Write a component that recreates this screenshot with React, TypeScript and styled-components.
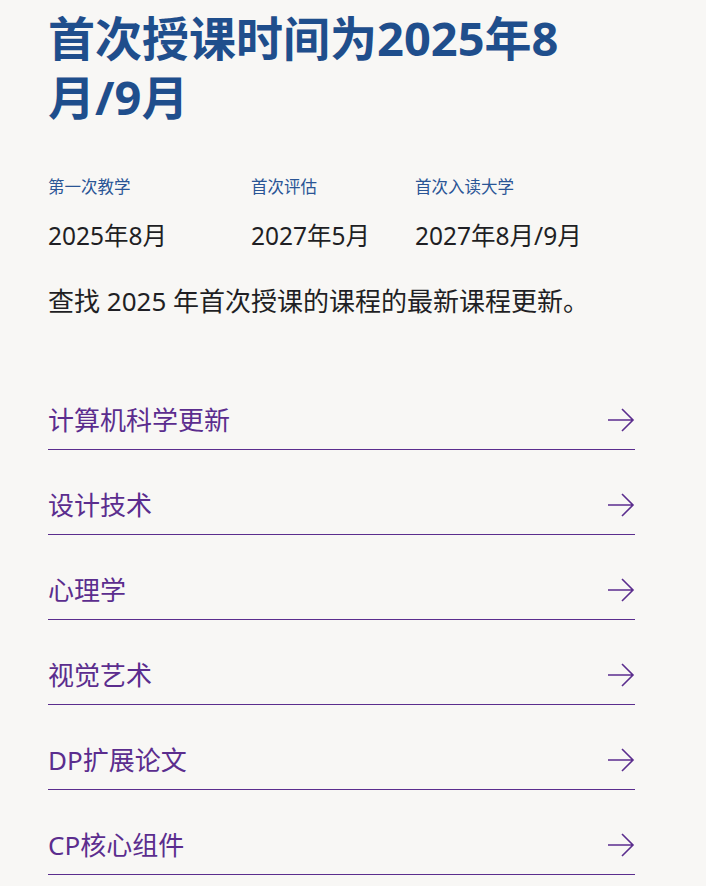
import styled, { createGlobalStyle } from "styled-components";

const GlobalStyle = createGlobalStyle`
  html, body {
    margin: 0;
    padding: 0;
    background: #f8f7f5;
  }
  body {
    font-family: "Noto Sans", "Noto Sans CJK SC", sans-serif;
  }
`;

const Page = styled.main`
  padding: 9px 71px 0 48px;
  min-height: 886px;
  box-sizing: border-box;
`;

const Title = styled.h1`
  margin: 0;
  max-width: 540px;
  font-size: 47px;
  line-height: 59px;
  font-weight: 700;
  color: #1f4e8c;
`;

const Dates = styled.div`
  display: grid;
  grid-template-columns: 203px 164px auto;
  margin-top: 49px;
`;

const DateItem = styled.div`
  display: flex;
  flex-direction: column;
  gap: 22px;
`;

const Label = styled.span`
  font-size: 16.5px;
  line-height: 22px;
  color: #2a5595;
`;

const Value = styled.span`
  font-size: 24.5px;
  line-height: 32px;
  color: #1f1f24;
`;

const Intro = styled.p`
  margin: 31px 0 0;
  font-size: 26px;
  line-height: 36px;
  color: #1f1f24;
`;

const LinkList = styled.ul`
  list-style: none;
  margin: 46px 0 0;
  padding: 0;
`;

const LinkRow = styled.li`
  display: flex;
  justify-content: space-between;
  align-items: flex-end;
  height: 85px;
  padding-bottom: 14px;
  box-sizing: border-box;
  border-bottom: 1px solid #5b2d8e;
  color: #5b2d8e;
  font-size: 26px;
  line-height: 30px;
`;

const ArrowBox = styled.span`
  display: flex;
  align-items: center;
  height: 30px;
  padding-top: 4px;
`;

const Arrow = () => (
  <ArrowBox>
    <svg width="28" height="26" viewBox="0 0 28 26" fill="none">
      <path d="M1 13H26M15 2L26 13L15 24" stroke="#5b2d8e" strokeWidth="1.6" />
    </svg>
  </ArrowBox>
);

const links = ["计算机科学更新", "设计技术", "心理学", "视觉艺术", "DP扩展论文", "CP核心组件"];

const dates = [
  { label: "第一次教学", value: "2025年8月" },
  { label: "首次评估", value: "2027年5月" },
  { label: "首次入读大学", value: "2027年8月/9月" },
];

export default function App() {
  return (
    <>
      <GlobalStyle />
      <Page>
        <Title>首次授课时间为2025年8月/9月</Title>
        <Dates>
          {dates.map((d) => (
            <DateItem key={d.label}>
              <Label>{d.label}</Label>
              <Value>{d.value}</Value>
            </DateItem>
          ))}
        </Dates>
        <Intro>查找 2025 年首次授课的课程的最新课程更新。</Intro>
        <LinkList>
          {links.map((l) => (
            <LinkRow key={l}>
              <span>{l}</span>
              <Arrow />
            </LinkRow>
          ))}
        </LinkList>
      </Page>
    </>
  );
}
